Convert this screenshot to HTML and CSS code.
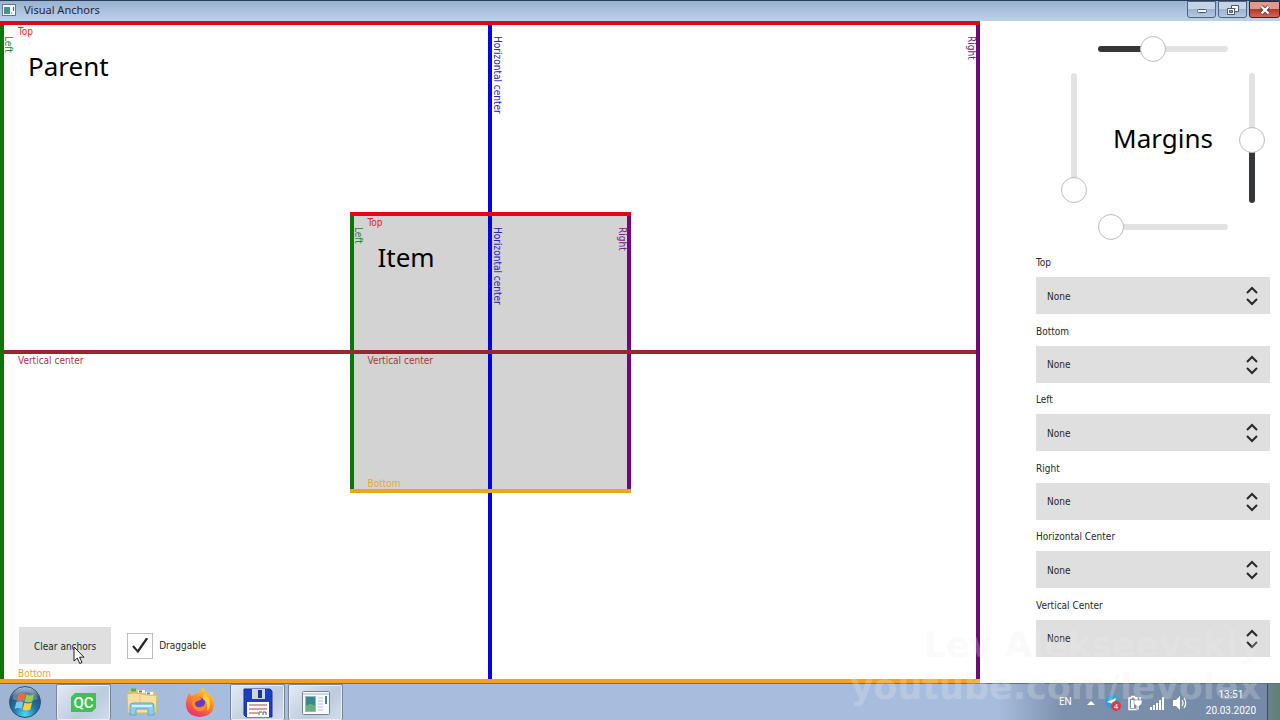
FILE: index.html
```html
<!DOCTYPE html>
<html lang="en">
<head>
  <meta charset="UTF-8">
  <meta name="viewport" content="width=device-width, initial-scale=1.0">
  <title>Visual Anchors</title>
  <link rel="stylesheet" href="styles.css">
</head>
<body>
  <header class="titlebar">
    <svg class="app-icon" width="14" height="12" viewBox="0 0 14 12">
      <rect x="0.5" y="0.5" width="13" height="11" fill="#f4f7fa" stroke="#66788c"/>
      <rect x="2" y="3" width="6" height="7" fill="#4b8f95"/>
      <path d="M9 9h1M11.500 3v4" stroke="#4f6478"/>
    </svg>
    <h1>Visual Anchors</h1>
    <div class="window-buttons">
      <button type="button" aria-label="Minimize">
        <svg width="12" height="10" viewBox="0 0 12 10"><rect x="1.500" y="4.500" width="9" height="3" rx="1" fill="#fff" stroke="#4a586c"/></svg>
      </button>
      <button type="button" aria-label="Restore">
        <svg width="12" height="10" viewBox="0 0 12 10"><path d="M4.500.500h7v6h-7z" fill="#fff" stroke="#4a586c"/><path d="M7 3h2v1H7z" fill="#8ca0bb"/><path d="M.500 3.500h7v6h-7z" fill="#fff" stroke="#4a586c"/><path d="M2.500 5.500h3v2h-3z" fill="#8ca0bb" stroke="#4a586c"/></svg>
      </button>
      <button type="button" class="close" aria-label="Close">
        <svg width="12" height="10" viewBox="0 0 12 10"><path d="M2.500 1.500l7 7M9.500 1.500l-7 7" stroke="#5d3a43" stroke-width="4"/><path d="M2.500 1.500l7 7M9.500 1.500l-7 7" stroke="#fff" stroke-width="2.400"/></svg>
      </button>
    </div>
  </header>

  <main>
    <section class="canvas frame">
      <span class="line h-center"></span>
      <span class="line v-center"></span>
      <span class="line left"></span>
      <span class="line right"></span>
      <span class="line top"></span>
      <span class="line bottom"></span>
      <span class="label top-label">Top</span>
      <span class="label bottom-label">Bottom</span>
      <span class="label left-label">Left</span>
      <span class="label right-label">Right</span>
      <span class="label h-label">Horizontal center</span>
      <span class="label v-label">Vertical center</span>
      <h2>Parent</h2>

      <div class="item frame">
        <span class="line left"></span>
        <span class="line right"></span>
        <span class="line h-center"></span>
        <span class="line top"></span>
        <span class="line bottom"></span>
        <span class="line v-center"></span>
        <span class="label top-label">Top</span>
        <span class="label bottom-label">Bottom</span>
        <span class="label left-label">Left</span>
        <span class="label right-label">Right</span>
        <span class="label h-label">Horizontal center</span>
        <span class="label v-label">Vertical center</span>
        <h2>Item</h2>
      </div>

      <div class="tools">
        <button type="button" class="clear">Clear anchors
          <svg class="cursor" width="12" height="19" viewBox="0 0 12 19"><path d="M1 1v14l3.300-3 2.400 5.500 2.300-1-2.400-5.300H11z" fill="#fff" stroke="#222"/></svg>
        </button>
        <label class="check"><input type="checkbox" checked>Draggable</label>
      </div>
    </section>

    <aside class="panel">
      <div class="margins">
        <input type="range" class="m-top" aria-label="Top margin" value="40" style="--value: 40%">
        <input type="range" class="m-left vertical" aria-label="Left margin" value="0" style="--value: 0%">
        <h2>Margins</h2>
        <input type="range" class="m-right vertical" aria-label="Right margin" value="48" style="--value: 48%">
        <input type="range" class="m-bottom" aria-label="Bottom margin" value="0" style="--value: 0%">
      </div>

      <form class="anchors">
        <div class="field">
          <label for="top">Top</label>
          <div class="combo">
            <select id="top"><option>None</option></select>
            <svg width="12" height="20" viewBox="0 0 12 20"><path d="M1 7l5-5 5 5M1 13l5 5 5-5"/></svg>
          </div>
        </div>
        <div class="field">
          <label for="bottom">Bottom</label>
          <div class="combo">
            <select id="bottom"><option>None</option></select>
            <svg width="12" height="20" viewBox="0 0 12 20"><path d="M1 7l5-5 5 5M1 13l5 5 5-5"/></svg>
          </div>
        </div>
        <div class="field">
          <label for="left">Left</label>
          <div class="combo">
            <select id="left"><option>None</option></select>
            <svg width="12" height="20" viewBox="0 0 12 20"><path d="M1 7l5-5 5 5M1 13l5 5 5-5"/></svg>
          </div>
        </div>
        <div class="field">
          <label for="right">Right</label>
          <div class="combo">
            <select id="right"><option>None</option></select>
            <svg width="12" height="20" viewBox="0 0 12 20"><path d="M1 7l5-5 5 5M1 13l5 5 5-5"/></svg>
          </div>
        </div>
        <div class="field">
          <label for="hcenter">Horizontal Center</label>
          <div class="combo">
            <select id="hcenter"><option>None</option></select>
            <svg width="12" height="20" viewBox="0 0 12 20"><path d="M1 7l5-5 5 5M1 13l5 5 5-5"/></svg>
          </div>
        </div>
        <div class="field">
          <label for="vcenter">Vertical Center</label>
          <div class="combo">
            <select id="vcenter"><option>None</option></select>
            <svg width="12" height="20" viewBox="0 0 12 20"><path d="M1 7l5-5 5 5M1 13l5 5 5-5"/></svg>
          </div>
        </div>
      </form>
    </aside>
  </main>

  <footer class="taskbar">
    <button type="button" class="start" aria-label="Start">
      <svg width="34" height="34" viewBox="0 0 34 34">
        <defs>
          <radialGradient id="orb" cx="50%" cy="90%" r="85%">
            <stop offset="0" stop-color="#4fd8f4"/>
            <stop offset="0.450" stop-color="#1a76a8"/>
            <stop offset="0.800" stop-color="#2a527c"/>
            <stop offset="1" stop-color="#9db9d2"/>
          </radialGradient>
        </defs>
        <circle cx="17" cy="17" r="15.500" fill="url(#orb)" stroke="#34506e"/>
        <path d="M4 14a13.500 13.500 0 0 1 26 0q-13 5-26 0z" fill="#fff" opacity="0.250"/>
        <path d="M10.500 9q3.500-2 7 0l-1.700 7q-3.500-1.500-7 0z" fill="#ef6a35"/>
        <path d="M18.500 9.500q3.500 2 7.500 0l-1.700 7q-4 2-7.500 0z" fill="#9bcf4a"/>
        <path d="M8.300 17q3.500-1.500 7 0l-1.700 7q-3.500-2-7 0z" fill="#7bc4f3"/>
        <path d="M16.500 17.500q3.500 2 7.500 0l-1.700 7q-4 2-7.500 0z" fill="#fbd044"/>
      </svg>
    </button>
    <button type="button" class="task open" aria-label="Qt Creator">
      <svg width="26" height="20" viewBox="0 0 26 20">
        <path d="M4 0h21v15l-4 4H0V4z" fill="#3fc153"/>
        <text x="12.500" y="15" text-anchor="middle" class="qc">QC</text>
      </svg>
    </button>
    <button type="button" class="task" aria-label="Explorer">
      <svg width="32" height="30" viewBox="0 0 32 30">
        <path d="M3 4q0-2 2-2h6l2 2h14q2 0 2 2v19H3z" fill="#e3c46c"/>
        <path d="M5 1.500h5v3H5z" fill="#4caf50"/><path d="M12 3h7v3h-7z" fill="#fff"/><path d="M13 3.500h3v2h-3z" fill="#d94b3b"/><path d="M20 5h7v3h-7z" fill="#fff"/><path d="M21 5.500h3v2h-3z" fill="#3f8ed8"/>
        <path d="M1 7q7-2 15 0t15 1l-1 18H2z" fill="#f6dfa0" stroke="#d9b961"/>
        <path d="M14 8v14" stroke="#e5c878"/>
        <path d="M4 28v-9q0-3 3-3h18q3 0 3 3v9h-6v-6H10v6z" fill="#92cbe9" stroke="#5ba6cf"/>
        <path d="M6 19h20" stroke="#d8f0fb" stroke-width="2"/>
      </svg>
    </button>
    <button type="button" class="task" aria-label="Firefox">
      <svg width="30" height="30" viewBox="0 0 30 30">
        <defs>
          <linearGradient id="fox" x1="0.800" y1="0" x2="0.300" y2="1">
            <stop offset="0" stop-color="#ffe23e"/>
            <stop offset="0.450" stop-color="#ff8b25"/>
            <stop offset="1" stop-color="#f0296e"/>
          </linearGradient>
        </defs>
        <path d="M2 11l2-5 3 3q3-3 7-3 1-4 4-6 1 4 5 6 6 4 6 11 0 12-14 13Q1 29 1 17q0-3 1-6z" fill="url(#fox)"/>
        <circle cx="15" cy="17" r="6.500" fill="#6b3bc4"/>
        <path d="M7 12q3-3 7-2l3 2-4 2q-3 0-3 3 1 4 6 3 5-1 4-6 3 4 0 8-4 4-9 1-5-3-4-11z" fill="#ff8a27"/>
        <path d="M20 7q5 4 5 10 0 5-3 7 1-8-3-11-3-3 1-6z" fill="#ffcf32"/>
      </svg>
    </button>
    <button type="button" class="task open" aria-label="Total Commander">
      <svg width="30" height="30" viewBox="0 0 30 30">
        <path d="M1 1h26l2 2v26H3l-2-2z" fill="#1b3fc0" stroke="#15309a"/>
        <path d="M9 1h13v10H9z" fill="#cfd6e2"/><path d="M15 2h4v8h-4z" fill="#1a3699"/>
        <path d="M4 14h22v15H4z" fill="#fff"/>
        <path d="M6 17h18M6 21h18M6 25h9" stroke="#a8444d"/>
        <path d="M16 27v-3h3M20 27v-3h3v3" stroke="#555" fill="none"/>
      </svg>
    </button>
    <button type="button" class="task open" aria-label="Visual Anchors">
      <svg width="28" height="24" viewBox="0 0 28 24">
        <rect x="0.500" y="0.500" width="27" height="23" rx="1" fill="#f6f8fa" stroke="#74828e"/>
        <path d="M1 3h26" stroke="#a8b5c0"/>
        <rect x="3.500" y="5.500" width="10" height="15" fill="#3d8696" stroke="#9cb3c2"/>
        <path d="M4 20v-5q5-4 9 0v5z" fill="#64b078"/>
        <path d="M16 7h5M16 10h5M16 13h5M16 16h5M16 19h5" stroke="#b9c3cc"/>
        <path d="M24 5v8" stroke="#468099" stroke-width="2"/>
      </svg>
    </button>
    <div class="tray">
      <span class="lang">EN</span>
      <svg width="8" height="4" viewBox="0 0 8 4"><path d="M0 4l4-4 4 4z" fill="#fff"/></svg>
      <svg class="telegram" width="16" height="16" viewBox="0 0 16 16"><circle cx="7" cy="7" r="7" fill="#2f9fd6"/><path d="M2 7l9-4-2 8-3-3z" fill="#fff"/><circle cx="11" cy="11" r="5" fill="#e03b3b"/><text x="11" y="14" text-anchor="middle" class="badge">4</text></svg>
      <svg width="14" height="16" viewBox="0 0 14 16"><path d="M3.500 1.500h3V3H9v11.500H1V3h2.500z" fill="none" stroke="#fff" stroke-width="1.500"/><path d="M3 5h3v8H3z" fill="#fff"/><path d="M8 2v4M12 2v4" stroke="#fff" stroke-width="1.500"/><path d="M6 5h8v3q0 2-3 3v4H9v-4q-3-1-3-3z" fill="#fff" stroke="#61758f" stroke-width="0.500"/></svg>
      <svg width="16" height="13" viewBox="0 0 16 13"><path d="M1 10h2v3H1zM4 8h2v5H4zM7 6h2v7H7zM10 3h2v10h-2zM13 0h2v13h-2z" fill="#fff"/></svg>
      <svg width="16" height="14" viewBox="0 0 16 14"><path d="M1 4h3l4-4v14l-4-4H1z" fill="#fff"/><path d="M10 4q2 3 0 6M12 2q3.500 5 0 10" fill="none" stroke="#fff" stroke-width="1.200"/></svg>
      <div class="clock"><span>13:51</span><span>20.03.2020</span></div>
    </div>
    <button type="button" class="show-desktop" aria-label="Show desktop"></button>
  </footer>

  <div class="watermark"><span>Lev Alekseevskiy</span><span>youtube.com/levolex</span></div>
</body>
</html>
```
FILE: styles.css
```css
* {
  box-sizing: border-box;
}
body {
  margin: 0;
  height: 100vh;
  display: flex;
  flex-direction: column;
  background-color: #fff;
  color: #26282a;
  font-family: "DejaVu Sans Condensed", "Noto Sans", sans-serif;
  font-size: 10px;
  overflow: hidden;
}
button, select, input {
  font: inherit;
  color: inherit;
  margin: 0;
}
h1, h2 {
  margin: 0;
  font-weight: normal;
}
h2 {
  color: #000;
  font-family: "Noto Sans", sans-serif;
  font-size: 26px;
  line-height: 34px;
}

/* Title bar */
.titlebar {
  height: 21px;
  flex: none;
  display: flex;
  align-items: center;
  gap: 8px;
  padding: 0 0 2px 2px;
  border-top: 1px solid #2b3d58;
  background: linear-gradient(#98b2d3, #bdd1ea);
}
.titlebar h1 {
  flex: 1;
  font-family: "Noto Sans", sans-serif;
  font-size: 11px;
  line-height: 16px;
  color: #1c2838;
}
.window-buttons {
  display: flex;
  align-self: flex-start;
  gap: 2px;
}
.window-buttons button {
  width: 29px;
  height: 17px;
  padding: 0;
  display: flex;
  align-items: center;
  justify-content: center;
  border: 1px solid #52647f;
  border-radius: 0 0 3px 3px;
  background: linear-gradient(#c4d3e6 45%, #9db3cf 50%, #b5c8e0);
}
.window-buttons .close {
  width: 31px;
  border-color: #4d1d25;
  background: linear-gradient(#dc9a90 45%, #b8372b 50%, #cf6a54);
}

main {
  flex: 1;
  min-height: 0;
  display: flex;
}

/* Anchor lines and labels, shared by the parent and the item */
.frame {
  position: relative;
}
.line {
  position: absolute;
}
.line.top, .line.bottom, .line.v-center {
  left: 0;
  right: 0;
  height: 4px;
}
.line.left, .line.right, .line.h-center {
  top: 0;
  bottom: 0;
  width: 4px;
}
.line.top {
  top: 0;
  background-color: #dd0a0f;
}
.line.bottom {
  bottom: 0;
  background-color: #f0a41d;
}
.line.left {
  left: 0;
  background-color: #0b760e;
}
.line.right {
  right: 0;
  background-color: #700878;
}
.line.h-center {
  left: calc(50% - 2px);
  background-color: #0402e4;
}
.line.v-center {
  top: calc(50% - 2px);
  background-color: #93282f;
}
.label {
  position: absolute;
  line-height: 12px;
}
.top-label, .bottom-label, .v-label {
  left: 18px;
}
.top-label {
  top: 5px;
  color: #e8262b;
}
.bottom-label {
  bottom: 3px;
  color: #eda634;
}
.v-label {
  top: calc(50% + 3px);
  color: #a8383c;
}
.left-label, .right-label, .h-label {
  top: 15px;
  writing-mode: vertical-rl;
}
.left-label {
  left: 2px;
  color: #23862a;
}
.right-label {
  right: 3px;
  color: #7c2187;
}
.h-label {
  left: calc(50% + 1px);
  color: #2a22b8;
}

.canvas {
  flex: 1;
  display: grid;
  grid-template-rows: 1fr auto 1fr;
}
.frame h2 {
  padding: 28px 28px 0;
}
.item {
  width: 281px;
  height: 281px;
  justify-self: center;
  background-color: #d3d3d3;
}
.tools {
  display: flex;
  align-items: center;
  align-self: end;
  gap: 16px;
  padding: 0 19px 19px;
}
.clear {
  position: relative;
  height: 37px;
  padding: 1px 15px 0;
  border: none;
  background-color: #dfdfdf;
}
.cursor {
  position: absolute;
  left: 54px;
  top: 19px;
}
.check {
  display: flex;
  align-items: center;
  gap: 6px;
}
.check input {
  appearance: none;
  width: 26px;
  height: 26px;
  display: grid;
  place-items: center;
  border: 1px solid #bdbdbd;
  background-color: #fff;
}
.check input:checked::before {
  content: "";
  width: 16px;
  height: 16px;
  background-color: #26282a;
  clip-path: polygon(0 58%, 10% 48%, 34% 76%, 88% 0, 100% 8%, 37% 98%);
}

/* Right panel */
.panel {
  width: 300px;
  flex: none;
  display: flex;
  flex-direction: column;
  gap: 11px;
  padding: 15px 10px 21px 56px;
}
.margins {
  display: grid;
  grid-template: 26px 130px 26px / 26px 130px 26px;
  gap: 11px;
  justify-content: end;
  padding-right: 5px;
}
.margins h2 {
  grid-area: 2 / 2;
  place-self: center;
}
.m-top {
  grid-area: 1 / 2;
}
.m-left {
  grid-area: 2 / 1;
}
.m-right {
  grid-area: 2 / 3;
}
.m-bottom {
  grid-area: 3 / 2;
}
.margins input {
  appearance: none;
  width: 130px;
  height: 26px;
  background: none;
}
.margins input::-webkit-slider-runnable-track {
  height: 6px;
  border-radius: 3px;
  background: linear-gradient(to right, #353637 var(--value), #e2e2e2 var(--value));
}
.margins input::-webkit-slider-thumb {
  appearance: none;
  width: 26px;
  height: 26px;
  margin-top: -10px;
  border: 1px solid #bdbdbd;
  border-radius: 50%;
  background-color: #fff;
}
.margins .vertical {
  width: 26px;
  height: 130px;
  writing-mode: vertical-lr;
  direction: rtl;
}
.margins .vertical::-webkit-slider-runnable-track {
  width: 6px;
  height: auto;
  background: linear-gradient(to top, #353637 var(--value), #e2e2e2 var(--value));
}
.margins .vertical::-webkit-slider-thumb {
  margin-top: 0;
  margin-left: -10px;
}
.anchors {
  flex: 1;
  display: grid;
  grid-auto-rows: 1fr;
}
.field label {
  display: block;
  line-height: 23px;
  margin-bottom: 3px;
}
.combo {
  position: relative;
}
.combo select {
  appearance: none;
  display: block;
  width: 100%;
  height: 37px;
  padding: 1px 11px 0;
  border: none;
  border-radius: 0;
  background-color: #dfdfdf;
}
.combo svg {
  position: absolute;
  right: 12px;
  top: 9px;
  fill: none;
  stroke: #26282a;
  stroke-width: 2;
  pointer-events: none;
}

/* Taskbar */
.taskbar {
  height: 37px;
  flex: none;
  display: flex;
  gap: 3px;
  border-top: 1px solid #5f7188;
  background: linear-gradient(to right, #9fb5d2, #a7bddd 15%, #a7bddd 78%, #7c91ae 83%, #7389a6);
}
.taskbar button {
  padding: 0;
  display: flex;
  align-items: center;
  justify-content: center;
  border: none;
  background: none;
}
.taskbar .start {
  width: 53px;
  padding-right: 3px;
}
.taskbar .task {
  width: 55px;
}
.taskbar .open {
  border: 1px solid #75879f;
  border-bottom: none;
  border-radius: 2px;
  background: linear-gradient(135deg, #e3eaf3, #bccbdf 60%, #d3deec);
  box-shadow: inset 0 0 0 1px #e6edf6;
}
.qc {
  fill: #fff;
  font-family: Roboto, sans-serif;
  font-size: 15px;
  font-weight: 500;
}
.tray {
  display: flex;
  align-items: center;
  gap: 7px;
  margin-left: auto;
  padding: 2px 8px 0 0;
  color: #fff;
  font-family: Roboto, sans-serif;
}
.lang {
  margin-right: 8px;
  padding-bottom: 4px;
}
.telegram {
  margin-left: 3px;
}
.badge {
  fill: #fff;
  font-size: 8px;
}
.clock {
  display: flex;
  flex-direction: column;
  align-items: center;
  margin-left: 11px;
  line-height: 16px;
}
.taskbar .show-desktop {
  width: 13px;
  border-left: 1px solid #3c4d60;
  background: linear-gradient(to right, #6c8190, #5f8072);
}

/* Faint channel name over the bottom right corner */
.watermark {
  position: absolute;
  right: 19px;
  bottom: 12px;
  display: flex;
  flex-direction: column;
  align-items: flex-end;
  color: rgba(235, 235, 235, 0.25);
  font: bold 35px/42px "DejaVu Sans", sans-serif;
  pointer-events: none;
}
```
